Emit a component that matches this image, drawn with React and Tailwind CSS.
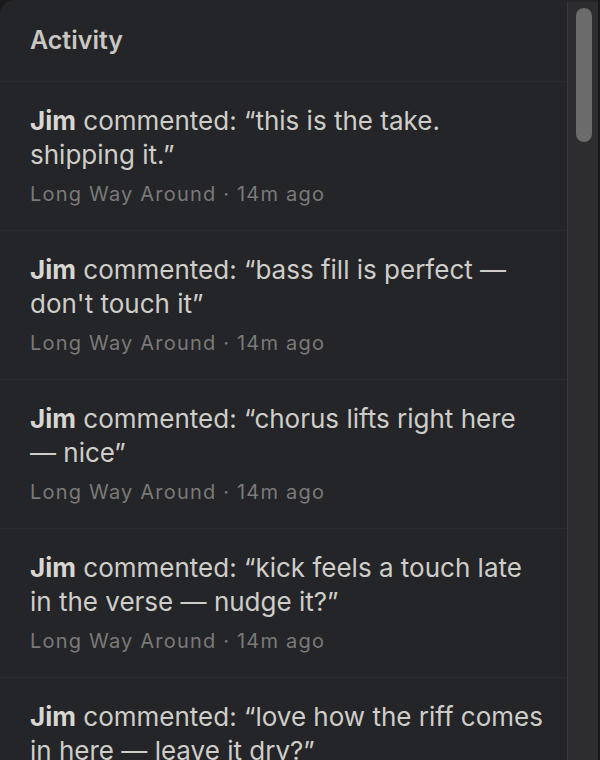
import React from 'react';

const items = [
  { who: 'Jim', text: '“this is the take. shipping it.”', song: 'Long Way Around', when: '14m ago' },
  { who: 'Jim', text: '“bass fill is perfect — don\'t touch it”', song: 'Long Way Around', when: '14m ago' },
  { who: 'Jim', text: '“chorus lifts right here — nice”', song: 'Long Way Around', when: '14m ago' },
  { who: 'Jim', text: '“kick feels a touch late in the verse — nudge it?”', song: 'Long Way Around', when: '14m ago' },
  { who: 'Jim', text: '“love how the riff comes in here — leave it dry?”', song: 'Long Way Around', when: '14m ago' },
];

function ActivityItem({ item }) {
  return (
    <div className="border-b border-[#2b2c30] pl-[30px] pr-[24px] pt-[22px] pb-[22px]">
      <p className="text-[26px] leading-[34px] text-[#cfcdc7]">
        <span className="font-bold text-[#d8d6d0]">{item.who}</span> commented: {item.text}
      </p>
      <p className="mt-[8px] text-[20px] leading-[28px] tracking-[1.2px] text-[#7a7a78]">
        {item.song} · {item.when}
      </p>
    </div>
  );
}

export default function App() {
  return (
    <div className="h-[760px] w-[600px] overflow-hidden bg-[#19191b]" style={{ fontFamily: 'Inter, "Noto Sans", sans-serif' }}>
      <div className="flex h-full w-[598px] rounded-tl-[14px] bg-[#242529]">
        <div className="min-w-0 flex-1 overflow-hidden">
          <div className="flex h-[82px] items-center border-b border-[#2b2c30] pl-[30px]">
            <h2 className="text-[25px] font-semibold text-[#c9c7c2]">Activity</h2>
          </div>
          {items.map((item, i) => (
            <ActivityItem key={i} item={item} />
          ))}
        </div>
        <div className="mt-[2px] w-[31px] border-l border-[#38393b] bg-[#2d2d2f] pl-[8px] pt-[6px]">
          <div className="h-[134px] w-[16px] rounded-full bg-[#6b6b6b]" />
        </div>
      </div>
    </div>
  );
}
